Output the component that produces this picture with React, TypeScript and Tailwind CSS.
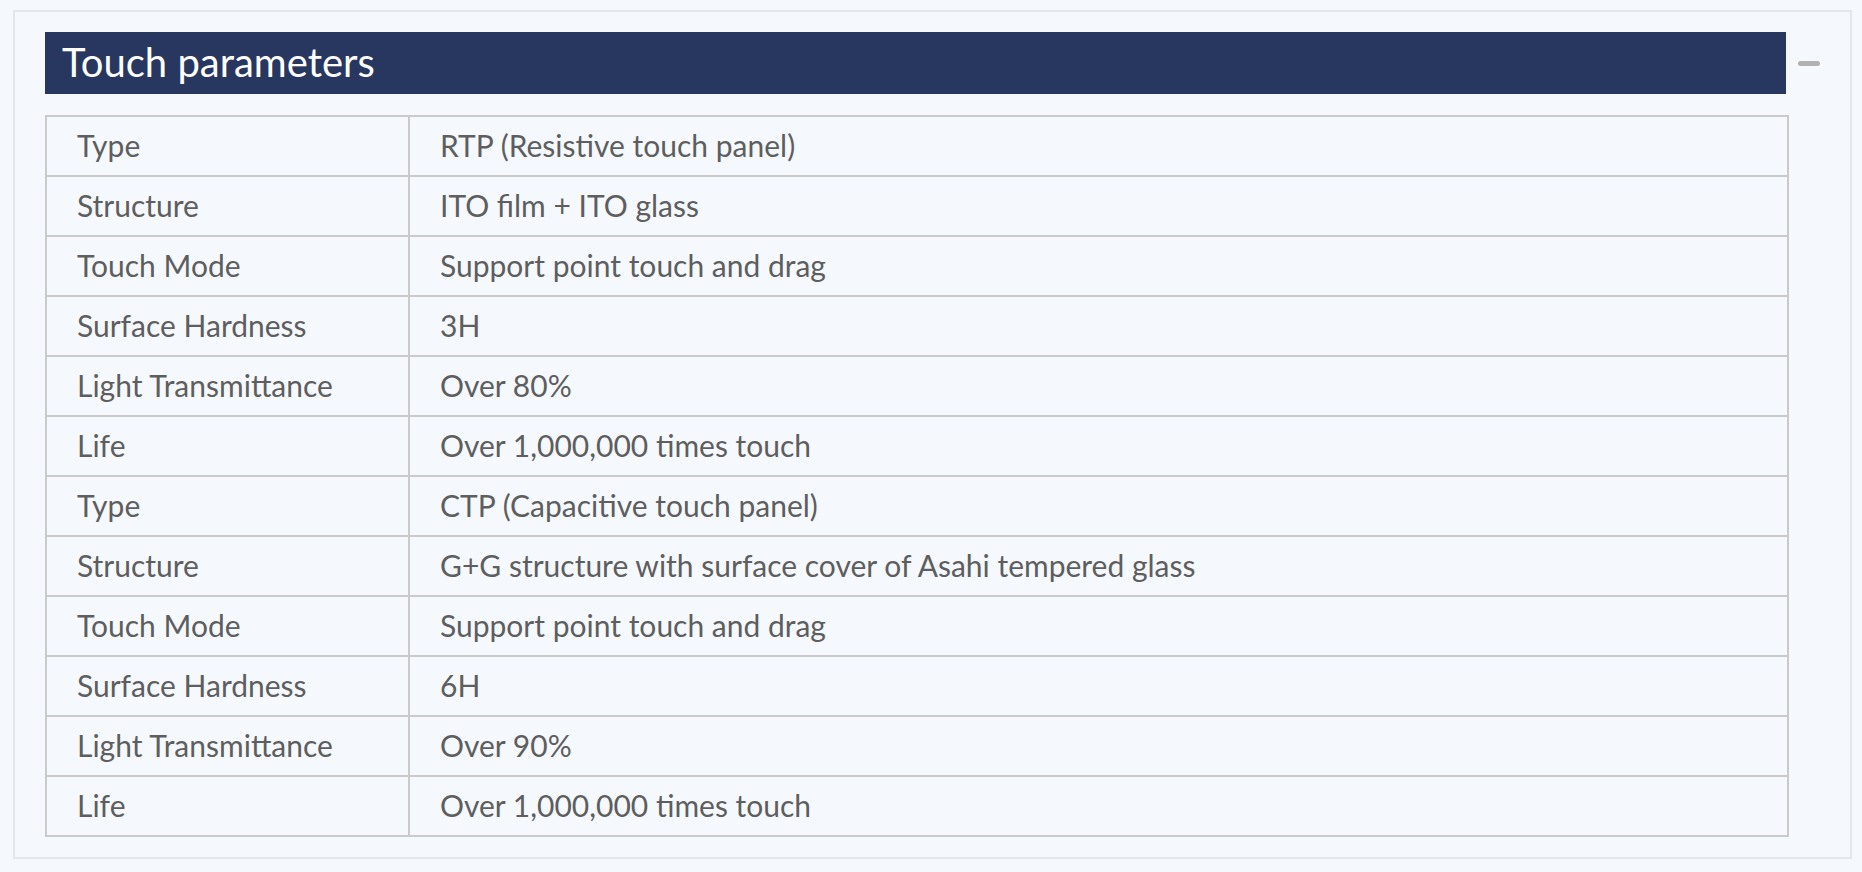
const rows: [string, string][] = [
  ["Type", "RTP (Resistive touch panel)"],
  ["Structure", "ITO film + ITO glass"],
  ["Touch Mode", "Support point touch and drag"],
  ["Surface Hardness", "3H"],
  ["Light Transmittance", "Over 80%"],
  ["Life", "Over 1,000,000 times touch"],
  ["Type", "CTP (Capacitive touch panel)"],
  ["Structure", "G+G structure with surface cover of Asahi tempered glass"],
  ["Touch Mode", "Support point touch and drag"],
  ["Surface Hardness", "6H"],
  ["Light Transmittance", "Over 90%"],
  ["Life", "Over 1,000,000 times touch"],
];

export default function App() {
  return (
    <div className="min-h-[872px] bg-[#f5f9fe] pt-[10px] pl-[13px] pr-[10px] font-['Lato','Open_Sans',sans-serif]">
      <section className="border-2 border-[#e3e6ea] pl-[30px] pr-[61px] pt-[20px] pb-[20px]">
        <div className="flex items-center pr-[3px]">
          <h2 className="flex h-[62px] flex-1 items-center bg-[#283760] pb-[2px] pl-[17px] text-[40px] text-white">
            Touch parameters
          </h2>
          <div className="w-0">
            <span className="ml-[12px] block h-[5px] w-[22px] rounded-full bg-[#b1b1b1]" />
          </div>
        </div>

        <table className="mt-[21px] w-full border-collapse border-2 border-[#cacaca] text-[30px] text-[#5e5e5e]">
          <tbody>
            {rows.map(([label, value], i) => (
              <tr key={i} className="h-[60px]">
                <td className="w-[363px] border-2 border-[#cacaca] pb-[2px] pl-[30px]">{label}</td>
                <td className="border-2 border-[#cacaca] pb-[2px] pl-[30px]">{value}</td>
              </tr>
            ))}
          </tbody>
        </table>
      </section>
    </div>
  );
}
